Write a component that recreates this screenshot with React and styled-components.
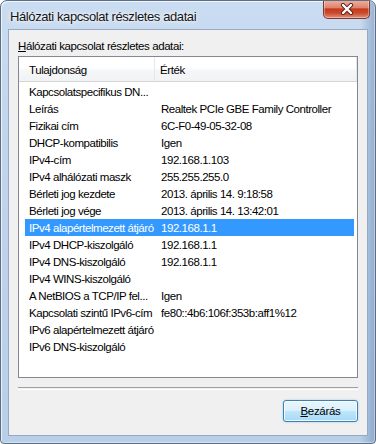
import React from 'react';
import styled, { createGlobalStyle } from 'styled-components';

const GlobalStyle = createGlobalStyle`
  html, body {
    margin: 0;
    padding: 0;
    background: #ffffff;
  }
  body {
    font-family: "Liberation Sans", Arial, sans-serif;
  }
`;

const Window = styled.div`
  width: 376px;
  height: 444px;
  box-sizing: border-box;
  border: 1px solid #5b6e86;
  border-radius: 7px 7px 4px 4px;
  background:
    linear-gradient(90deg, rgba(255,255,255,0) 0%, rgba(255,255,255,0) 96%, rgba(60,100,150,0.35) 100%),
    linear-gradient(180deg, #cadcf1 0%, #c1d5ec 30%, #b9cfe8 100%);
  box-shadow: inset 1px 1px 0 rgba(255,255,255,0.7), inset -1px -1px 0 rgba(255,255,255,0.4);
  padding: 0 7px 7px 7px;
  display: flex;
  flex-direction: column;
  overflow: hidden;
`;

const TitleBar = styled.div`
  height: 29px;
  display: flex;
  align-items: flex-start;
  justify-content: space-between;
`;

const Title = styled.div`
  margin-top: 8px;
  margin-left: 2px;
  font-size: 13px;
  color: #141414;
  text-shadow: 0 0 6px #ffffff, 0 0 3px #ffffff;
  letter-spacing: -0.4px;
`;

const CloseButton = styled.div`
  width: 47px;
  height: 19px;
  margin-top: -1px;
  margin-right: -2px;
  box-sizing: border-box;
  border: 1px solid #7a3a30;
  border-top: none;
  border-radius: 0 0 5px 5px;
  background: linear-gradient(180deg, #eeb3a2 0%, #e0846c 42%, #c7391c 50%, #c94a2c 72%, #e4907a 100%);
  box-shadow: inset 0 0 0 1px rgba(255,255,255,0.35);
  display: flex;
  align-items: center;
  justify-content: center;
`;

const Client = styled.div`
  flex: 1;
  box-sizing: border-box;
  background: #f0f0f0;
  border: 1px solid #95a9c2;
  padding: 8px 9px 13px 9px;
  display: flex;
  flex-direction: column;
`;

const Label = styled.div`
  height: 16px;
  line-height: 16px;
  font-size: 11.5px;
  color: #000;
  margin-bottom: 2px;
  letter-spacing: -0.4px;
`;

const Key = styled.span`
  text-decoration: underline;
`;

const List = styled.div`
  height: 322px;
  box-sizing: border-box;
  border: 1px solid #828790;
  background: #ffffff;
  display: flex;
  flex-direction: column;
`;

const Header = styled.div`
  height: 25px;
  box-sizing: border-box;
  border-bottom: 1px solid #d5d5d5;
  background: linear-gradient(180deg, #ffffff 0%, #ffffff 45%, #f6f7f9 55%, #f1f2f4 100%);
  display: grid;
  grid-template-columns: 136px 1fr;
  font-size: 11.5px;
  letter-spacing: -0.4px;
`;

const HeaderCell = styled.div`
  display: flex;
  align-items: center;
  padding-left: ${p => p.$pad}px;
  padding-top: 2px;
  color: #000;
  border-right: 1px solid #e3e8ee;
`;

const Rows = styled.div`
  padding: 1px 3px 0 6px;
  display: flex;
  flex-direction: column;
`;

const Row = styled.div`
  height: 17px;
  display: grid;
  grid-template-columns: 132px 1fr;
  padding-left: 4px;
  align-items: center;
  font-size: 11.5px;
  letter-spacing: -0.45px;
  white-space: nowrap;
  background: ${p => (p.$selected ? '#3399ff' : 'transparent')};
  color: ${p => (p.$selected ? '#ffffff' : '#000000')};
`;

const Cell = styled.div`
  overflow: hidden;
`;

const Separator = styled.div`
  margin-top: 9px;
  height: 1px;
  border-top: 1px solid #a0a0a0;
  border-bottom: 1px solid #ffffff;
`;

const Footer = styled.div`
  margin-top: 10px;
  display: flex;
  justify-content: flex-end;
`;

const Button = styled.div`
  width: 75px;
  height: 22px;
  box-sizing: border-box;
  border: 1px solid #3c7fb1;
  border-radius: 3px;
  background: linear-gradient(180deg, #eaf6fd 0%, #d9f0fc 50%, #bee6fd 50%, #a7d9f5 100%);
  box-shadow: inset 0 0 0 1px rgba(255,255,255,0.8), 0 0 2px rgba(80,170,230,0.6);
  display: flex;
  align-items: center;
  justify-content: center;
  font-size: 11.5px;
  color: #000;
  letter-spacing: -0.3px;
`;

const rows = [
  ['Kapcsolatspecifikus DN...', ''],
  ['Leírás', 'Realtek PCIe GBE Family Controller'],
  ['Fizikai cím', '6C-F0-49-05-32-08'],
  ['DHCP-kompatibilis', 'Igen'],
  ['IPv4-cím', '192.168.1.103'],
  ['IPv4 alhálózati maszk', '255.255.255.0'],
  ['Bérleti jog kezdete', '2013. április 14. 9:18:58'],
  ['Bérleti jog vége', '2013. április 14. 13:42:01'],
  ['IPv4 alapértelmezett átjáró', '192.168.1.1'],
  ['IPv4 DHCP-kiszolgáló', '192.168.1.1'],
  ['IPv4 DNS-kiszolgáló', '192.168.1.1'],
  ['IPv4 WINS-kiszolgáló', ''],
  ['A NetBIOS a TCP/IP fel...', 'Igen'],
  ['Kapcsolati szintű IPv6-cím', 'fe80::4b6:106f:353b:aff1%12'],
  ['IPv6 alapértelmezett átjáró', ''],
  ['IPv6 DNS-kiszolgáló', ''],
];

function CloseIcon() {
  return (
    <svg width="14" height="12" viewBox="0 0 14 12">
      <path d="M3 2 L11 10 M11 2 L3 10" stroke="#5a2018" strokeWidth="4.2" strokeLinecap="round" />
      <path d="M3 2 L11 10 M11 2 L3 10" stroke="#ffffff" strokeWidth="2.4" strokeLinecap="round" />
    </svg>
  );
}

export default function App() {
  return (
    <>
      <GlobalStyle />
      <Window>
        <TitleBar>
          <Title>Hálózati kapcsolat részletes adatai</Title>
          <CloseButton>
            <CloseIcon />
          </CloseButton>
        </TitleBar>
        <Client>
          <Label>
            <Key>H</Key>álózati kapcsolat részletes adatai:
          </Label>
          <List>
            <Header>
              <HeaderCell $pad={10}>Tulajdonság</HeaderCell>
              <HeaderCell $pad={5}>Érték</HeaderCell>
            </Header>
            <Rows>
              {rows.map(([name, value], i) => (
                <Row key={name} $selected={i === 8}>
                  <Cell>{name}</Cell>
                  <Cell>{value}</Cell>
                </Row>
              ))}
            </Rows>
          </List>
          <Separator />
          <Footer>
            <Button>
              <span><Key>B</Key>ezárás</span>
            </Button>
          </Footer>
        </Client>
      </Window>
    </>
  );
}
